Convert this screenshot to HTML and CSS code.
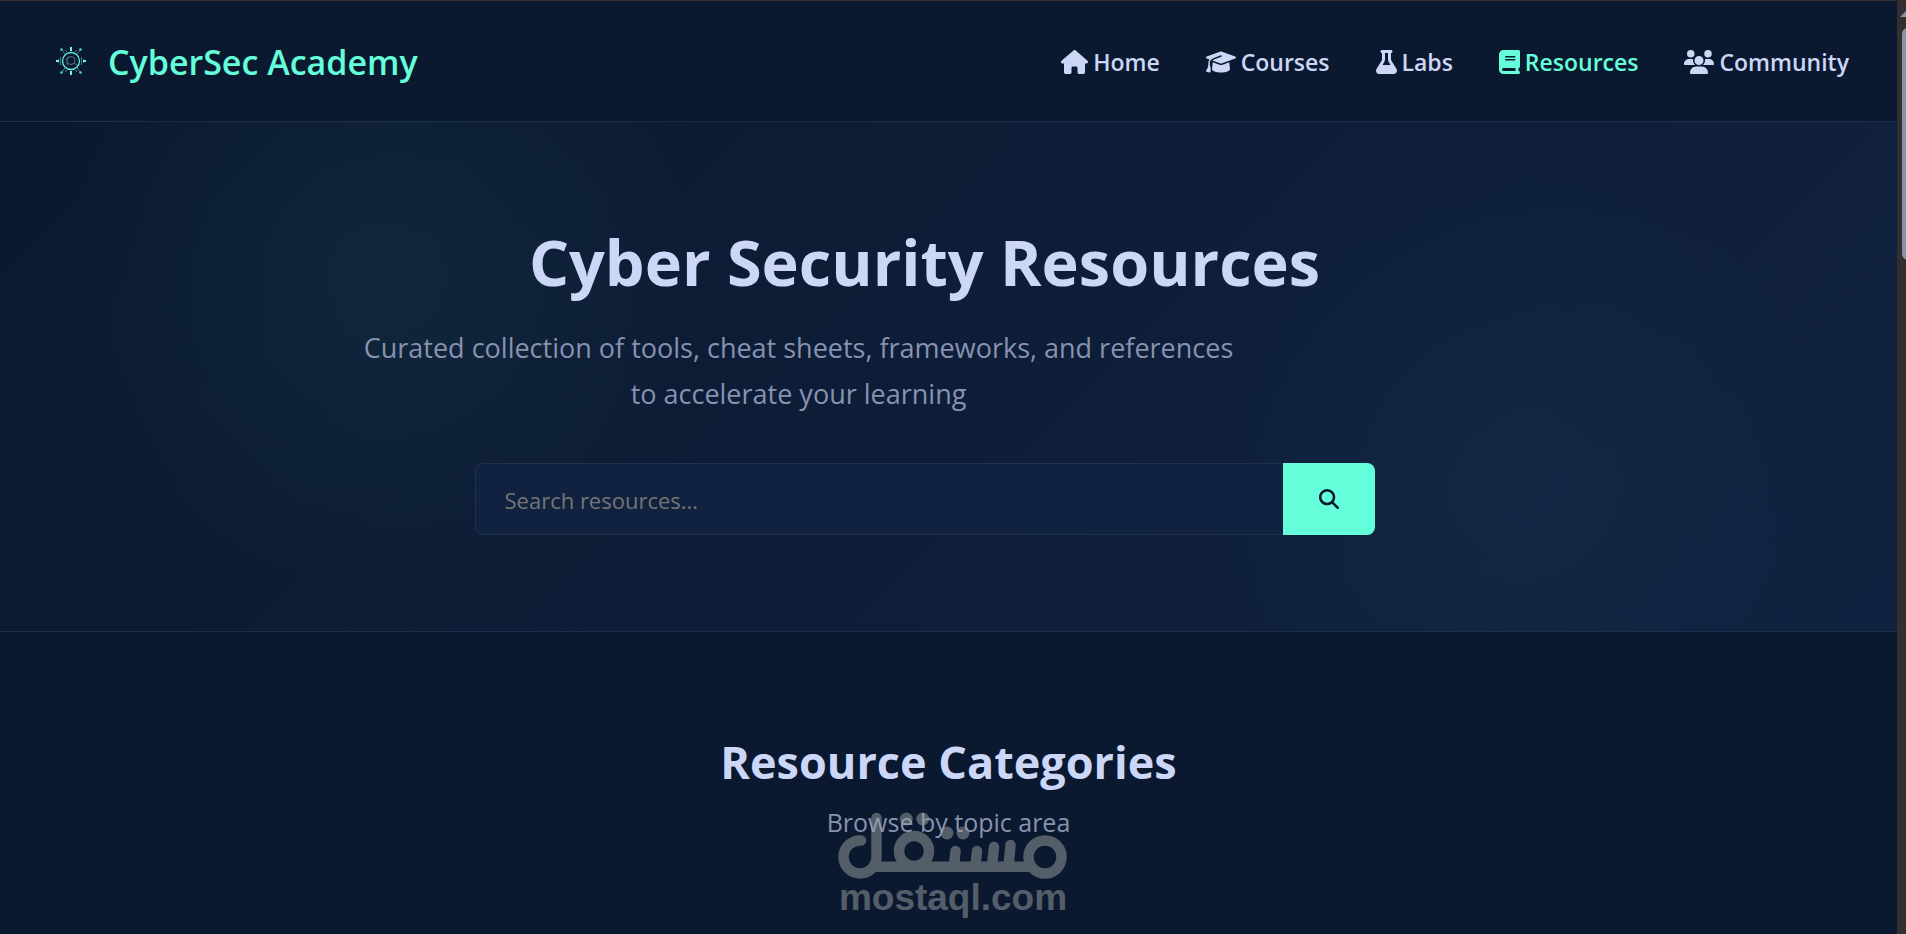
FILE: index.html
```html
<!DOCTYPE html>
<html lang="en">
<head>
<meta charset="utf-8">
<title>CyberSec Academy</title>
<link rel="stylesheet" href="styles.css">
</head>
<body>
<div class="window">
<div class="page">
<header class="site-header">
<a class="brand" href="#">
<svg class="brand-logo" viewBox="0 0 30 30" fill="none" aria-hidden="true">
<g stroke="#4c7590" stroke-width="1"><path d="M9 8 6 4M21 8l3-4M9 22l-3 4M21 22l3 4M11 6l-2-2M19 6l2-2M11 24l-2 2M19 24l2 2"/><path d="M4.500 11v8M2.500 13v4M25.500 11v8M27.500 13v4"/><circle cx="15" cy="14.500" r="4"/><path d="m18 17 3 2M10 16l2 3M12 11l-2 3"/></g>
<circle cx="15" cy="15" r="8.500" stroke="#5ff0d2" stroke-width="1.300"/>
<path d="M15 1v4M15 25v4M0 15h3M27 15h3" stroke="#64ffda" stroke-width="2"/>
<g fill="#4fd6c8"><circle cx="5.500" cy="3.500" r="1.300"/><circle cx="24.500" cy="3.500" r="1.300"/><circle cx="5.500" cy="26.500" r="1.300"/><circle cx="24.500" cy="26.500" r="1.300"/></g>
</svg>
<span>CyberSec Academy</span>
</a>
<nav class="main-nav">
<a class="nav-link" href="#"><svg class="icon" viewBox="0 0 576 512" aria-hidden="true"><path d="M575.8 255.5c0 18-15 32.1-32 32.1h-32l.7 160.2c0 2.7-.2 5.4-.5 8.1V472c0 22.1-17.9 40-40 40H456c-1.100 0-2.200 0-3.300-.1c-1.400 .1-2.800 .1-4.200 .1H416 392c-22.100 0-40-17.900-40-40V448 384c0-17.700-14.300-32-32-32H256c-17.700 0-32 14.300-32 32v64 24c0 22.100-17.900 40-40 40H160 128.100c-1.500 0-3-.1-4.500-.2c-1.200 .1-2.400 .2-3.600 .2H104c-22.100 0-40-17.900-40-40V360c0-.9 0-1.900 .1-2.800V287.600H32c-18 0-32-14-32-32.100c0-9 3-17 10-24L266.400 8c7-7 15-8 22-8s15 2 21 7L564.800 231.500c8 7 12 15 11 24z"/></svg><span>Home</span></a>
<a class="nav-link" href="#"><svg class="icon" viewBox="0 0 640 512" aria-hidden="true"><path d="M320 32c-8.100 0-16.100 1.400-23.700 4.100L15.800 137.400C6.300 140.900 0 149.900 0 160s6.300 19.100 15.800 22.600l57.900 20.900C57.300 229.300 48 259.800 48 291.900v28.100c0 28.400-10.800 57.700-22.300 80.800c-6.500 13-13.900 25.800-22.500 37.600C0 442.700-.9 448.300 .9 453.400s6 8.900 11.200 10.200l64 16c4.200 1.100 8.700 .3 12.400-2s6.300-6.100 7.100-10.400c8.600-42.800 4.300-81.200-2.100-108.700C90.300 344.300 86 329.800 80 316.500V291.900c0-30.200 10.200-58.700 27.900-81.500c12.900-15.500 29.600-28 49.200-35.700l157-61.700c8.200-3.200 17.500 .8 20.700 9s-.8 17.500-9 20.700l-157 61.700c-12.400 4.900-23.300 12.400-32.200 21.600l159.600 57.600c7.600 2.700 15.600 4.100 23.700 4.100s16.100-1.400 23.700-4.100L624.200 182.600c9.500-3.400 15.800-12.500 15.800-22.600s-6.300-19.100-15.800-22.600L343.700 36.100C336.100 33.400 328.100 32 320 32zM128 408c0 35.300 86 72 192 72s192-36.700 192-72L496.700 262.600 354.500 314c-11.100 4-22.800 6-34.500 6s-23.500-2-34.500-6L143.300 262.600 128 408z"/></svg><span>Courses</span></a>
<a class="nav-link" href="#"><svg class="icon" viewBox="0 0 448 512" aria-hidden="true"><path d="M288 0H160 128C110.300 0 96 14.300 96 32s14.300 32 32 32V196.800c0 11.800-3.300 23.500-9.500 33.500L10.300 406.200C3.600 417.200 0 429.700 0 442.600C0 480.900 31.100 512 69.400 512H378.600c38.300 0 69.400-31.100 69.400-69.400c0-12.800-3.600-25.400-10.300-36.400L329.500 230.400c-6.200-10.100-9.500-21.700-9.500-33.500V64c17.700 0 32-14.300 32-32s-14.300-32-32-32H288zM192 196.800V64h64V196.800c0 23.700 6.600 46.900 19 67.100L309.500 320h-171L173 263.900c12.400-20.200 19-43.400 19-67.100z"/></svg><span>Labs</span></a>
<a class="nav-link nav-link-active" href="#" aria-current="page"><svg class="icon" viewBox="0 0 448 512" aria-hidden="true"><path d="M96 0C43 0 0 43 0 96V416c0 53 43 96 96 96H384h32c17.700 0 32-14.300 32-32s-14.300-32-32-32V384c17.700 0 32-14.300 32-32V32c0-17.700-14.300-32-32-32H384 96zm0 384H352v64H96c-17.700 0-32-14.300-32-32s14.300-32 32-32zm32-240c0-8.800 7.200-16 16-16H336c8.800 0 16 7.200 16 16s-7.200 16-16 16H144c-8.800 0-16-7.200-16-16zm16 48H336c8.800 0 16 7.200 16 16s-7.200 16-16 16H144c-8.800 0-16-7.200-16-16s7.200-16 16-16z"/></svg><span>Resources</span></a>
<a class="nav-link" href="#"><svg class="icon" viewBox="0 0 640 512" aria-hidden="true"><path d="M144 0a80 80 0 1 1 0 160A80 80 0 1 1 144 0zM512 0a80 80 0 1 1 0 160A80 80 0 1 1 512 0zM0 298.700C0 239.800 47.800 192 106.700 192h42.700c15.900 0 31 3.500 44.600 9.700c-1.300 7.200-1.900 14.700-1.900 22.300c0 38.200 16.800 72.500 43.300 96c-.2 0-.4 0-.7 0H21.300C9.600 320 0 310.400 0 298.700zM405.300 320c-.2 0-.4 0-.7 0c26.600-23.500 43.300-57.800 43.300-96c0-7.600-.7-15-1.900-22.300c13.600-6.300 28.700-9.700 44.600-9.700h42.700C592.200 192 640 239.800 640 298.700c0 11.800-9.600 21.300-21.300 21.300H405.300zM224 224a96 96 0 1 1 192 0 96 96 0 1 1-192 0zM128 485.300C128 411.700 187.700 352 261.300 352H378.700C452.300 352 512 411.700 512 485.300c0 14.700-11.900 26.700-26.700 26.700H154.700c-14.700 0-26.700-11.900-26.700-26.700z"/></svg><span>Community</span></a>
</nav>
</header>
<main>
<section class="hero">
<div class="hero-content">
<h1 class="hero-title">Cyber Security Resources</h1>
<p class="hero-text">Curated collection of tools, cheat sheets, frameworks, and references to accelerate your learning</p>
<form class="search" role="search">
<input class="search-input" type="text" placeholder="Search resources..." aria-label="Search resources">
<button class="search-button" type="button" aria-label="Search"><svg class="search-icon" viewBox="0 0 512 512" aria-hidden="true"><path d="M416 208c0 45.900-14.900 88.300-40 122.700L502.600 457.400c12.500 12.500 12.500 32.800 0 45.300s-32.800 12.500-45.300 0L330.700 376c-34.400 25.200-76.800 40-122.700 40C93.100 416 0 322.900 0 208S93.100 0 208 0S416 93.100 416 208zM208 352a144 144 0 1 0 0-288 144 144 0 1 0 0 288z"/></svg></button>
</form>
</div>
</section>
<section class="categories">
<h2 class="section-title">Resource Categories</h2>
<p class="section-text">Browse by topic area</p>
</section>
</main>
</div>
<div class="scrollbar" aria-hidden="true"><div class="scroll-arrow"></div><div class="scroll-thumb"></div></div>
<div class="watermark">
<svg class="watermark-mark" viewBox="0 0 230 68" fill="none" stroke="#9ea2a3" stroke-width="10.500" stroke-linecap="round" aria-hidden="true">
<path d="M23 28.500A16.500 16.500 0 1 0 38.500 45V6"/><path d="M34 54.800h160" stroke-linecap="butt"/><circle cx="76" cy="39" r="15"/><circle cx="207" cy="45" r="16.500"/><path d="m116 54 1.500-15M137.500 54l1.500-15M154 54l2-19M170.500 54l2-21"/>
<g fill="#9ea2a3" stroke="none"><circle cx="68.300" cy="7" r="6.500"/><circle cx="84.700" cy="7" r="6.500"/><circle cx="109" cy="21" r="6.500"/><circle cx="125" cy="21" r="6.500"/></g>
</svg>
<span class="watermark-text">mostaql.com</span>
</div>
</div>
</body>
</html>
```
FILE: styles.css
```css
* { box-sizing: border-box; }
body { margin: 0; background: #0a192f; color: #ccd6f6; font-family: "Open Sans", "Noto Sans", sans-serif; }
h1, h2, p { margin: 0; }
.window { position: relative; display: flex; min-height: 100vh; overflow: hidden; border-top: 1px solid #332f30; }
.page { flex: 1; min-width: 0; }
.site-header { display: flex; align-items: center; justify-content: space-between; height: 121px; padding: 2px 48px 0; border-bottom: 1px solid #1d2d4a; }
.brand { display: flex; align-items: center; gap: 22px; padding-left: 8px; color: #64ffda; font-size: 34px; font-weight: 600; text-decoration: none; }
.brand-logo { width: 30px; height: 30px; margin-bottom: 2px; }
.main-nav { display: flex; gap: 46px; }
.nav-link { display: flex; align-items: center; gap: 5px; color: #ccd6f6; font-size: 23px; font-weight: 600; text-decoration: none; }
.nav-link-active { color: #64ffda; }
.icon { height: 24px; fill: currentColor; }
.hero { padding: 100px 48px 96px; border-bottom: 1px solid #1d2d4a; background: radial-gradient(circle at 20% 30%, rgba(100, 255, 218, 0.05), transparent 320px), radial-gradient(circle at 80% 70%, rgba(60, 160, 180, 0.06), transparent 320px), linear-gradient(135deg, #0a192f, #112240); }
.hero-content { max-width: 1200px; margin: 0 auto; padding-right: 48px; }
.hero-title { margin-bottom: 23px; font-size: 63px; font-weight: 700; line-height: 80px; text-align: center; }
.hero-text { max-width: 900px; color: #8892b0; font-size: 27px; line-height: 46px; text-align: center; }
.search { display: flex; max-width: 900px; margin: 46px auto 0; }
.search-input { flex: 1; min-width: 0; height: 72px; padding: 2px 29px 0; border: 1px solid #22304d; border-right: 0; border-radius: 8px 0 0 8px; background: #112240; color: #ccd6f6; font: inherit; font-size: 22px; }
.search-input::placeholder { color: #757575; opacity: 1; }
.search-button { display: flex; align-items: center; justify-content: center; width: 92px; border: 0; border-radius: 0 8px 8px 0; background: #64ffda; color: #0a192f; }
.search-icon { width: 20px; height: 20px; fill: currentColor; }
.categories { padding: 94px 48px; text-align: center; }
.section-title { margin-bottom: 4px; font-size: 45px; font-weight: 700; line-height: 72px; }
.section-text { color: #8892b0; font-size: 25px; line-height: 40px; }
.scrollbar { width: 9px; overflow: hidden; background: #332f30; }
.scroll-arrow { width: 12px; height: 6px; margin: 10px 0 11px 3px; background: #8892a6; clip-path: polygon(50% 0, 100% 100%, 0 100%); }
.scroll-thumb { width: 12px; height: 232px; margin-left: 5px; border-radius: 6px; background: #8892a6; }
.watermark { position: absolute; bottom: 20px; left: 50%; display: flex; flex-direction: column; align-items: center; width: 230px; margin-left: -115px; opacity: 0.5; color: #9ea2a3; }
.watermark-mark { width: 230px; height: 68px; }
.watermark-text { font: 700 37px/36px "Liberation Sans", sans-serif; }
```
